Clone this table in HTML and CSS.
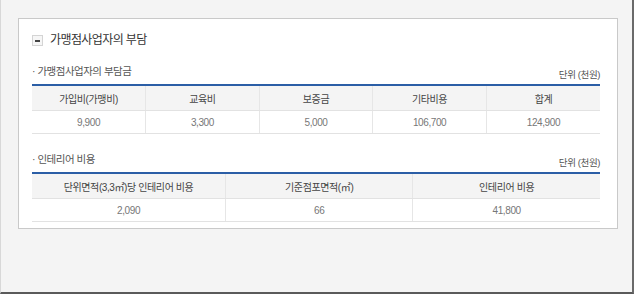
FILE: index.html
```html
<!DOCTYPE html>
<html lang="ko">
<head>
    <meta charset="UTF-8">
    <meta name="viewport" content="width=device-width, initial-scale=1.0">
    <title>가맹점사업자의 부담</title>
    <link rel="stylesheet" href="styles.css">
</head>
<body>
    <div class="frame">
        <div class="panel">
            <h2 class="panel-title"><span class="toggle"></span>가맹점사업자의 부담</h2>

            <div class="section">
                <div class="section-head">
                    <h3>· 가맹점사업자의 부담금</h3>
                    <span class="unit">단위 (천원)</span>
                </div>
                <table class="cost-table">
                    <tr>
                        <th>가입비(가맹비)</th>
                        <th>교육비</th>
                        <th>보증금</th>
                        <th>기타비용</th>
                        <th>합계</th>
                    </tr>
                    <tr>
                        <td>9,900</td>
                        <td>3,300</td>
                        <td>5,000</td>
                        <td>106,700</td>
                        <td>124,900</td>
                    </tr>
                </table>
            </div>

            <div class="section">
                <div class="section-head">
                    <h3>· 인테리어 비용</h3>
                    <span class="unit">단위 (천원)</span>
                </div>
                <table class="cost-table interior">
                    <tr>
                        <th>단위면적(3,3㎡)당 인테리어 비용</th>
                        <th>기준점포면적(㎡)</th>
                        <th>인테리어 비용</th>
                    </tr>
                    <tr>
                        <td>2,090</td>
                        <td>66</td>
                        <td>41,800</td>
                    </tr>
                </table>
            </div>
        </div>
    </div>
</body>
</html>
```

FILE: styles.css
```css
body {
    margin: 0;
    padding: 0;
    font-family: "Liberation Sans", "Noto Sans CJK KR", sans-serif;
    background: #fff;
}

.frame {
    width: 634px;
    height: 294px;
    padding: 18px 0 0 17px;
    box-sizing: border-box;
    background: #f4f4f4;
    border-left: 1px solid #d8d8d8;
    border-right: 2px solid #6a6a6a;
    border-bottom: 2px solid #5a5a5a;
}

.panel {
    width: 600px;
    box-sizing: border-box;
    padding: 15px 17px 6px 13px;
    background: #fff;
    border: 1px solid #c9c9c9;
}

.panel-title {
    display: flex;
    align-items: center;
    margin: 0;
    font-size: 12px;
    font-weight: normal;
    color: #333;
    letter-spacing: -0.6px;
    line-height: 13px;
}

.toggle {
    position: relative;
    width: 9px;
    height: 9px;
    margin-right: 7px;
    border: 1px solid #d4d4d4;
    background: #f6f6f6;
}

.toggle::after {
    content: "";
    position: absolute;
    left: 2px;
    top: 4px;
    width: 5px;
    height: 2px;
    background: #444;
}

.section {
    margin-top: 18px;
}

.section + .section {
    margin-top: 19px;
}

.section-head {
    display: flex;
    justify-content: space-between;
    align-items: flex-end;
    height: 16px;
    margin-bottom: 3px;
}

.section-head h3 {
    margin: 0;
    align-self: flex-start;
    font-size: 10.5px;
    font-weight: normal;
    color: #555;
    letter-spacing: -0.5px;
    line-height: 12px;
}

.unit {
    font-size: 9.5px;
    color: #555;
    letter-spacing: -0.4px;
    line-height: 12px;
}

.cost-table {
    width: 100%;
    border-collapse: collapse;
    table-layout: fixed;
    border-top: 2px solid #2b5ea6;
    font-size: 10px;
    letter-spacing: -0.4px;
}

.cost-table th,
.cost-table td {
    text-align: center;
    border-left: 1px solid #e6e6e6;
    border-bottom: 1px solid #e2e2e2;
    padding: 0;
}

.cost-table th:first-child,
.cost-table td:first-child {
    border-left: none;
}

.cost-table th {
    height: 24px;
    font-weight: normal;
    color: #444;
    background: #f4f4f4;
}

.cost-table td {
    height: 22px;
    color: #777;
}

.interior th:first-child {
    width: 34%;
}
```
